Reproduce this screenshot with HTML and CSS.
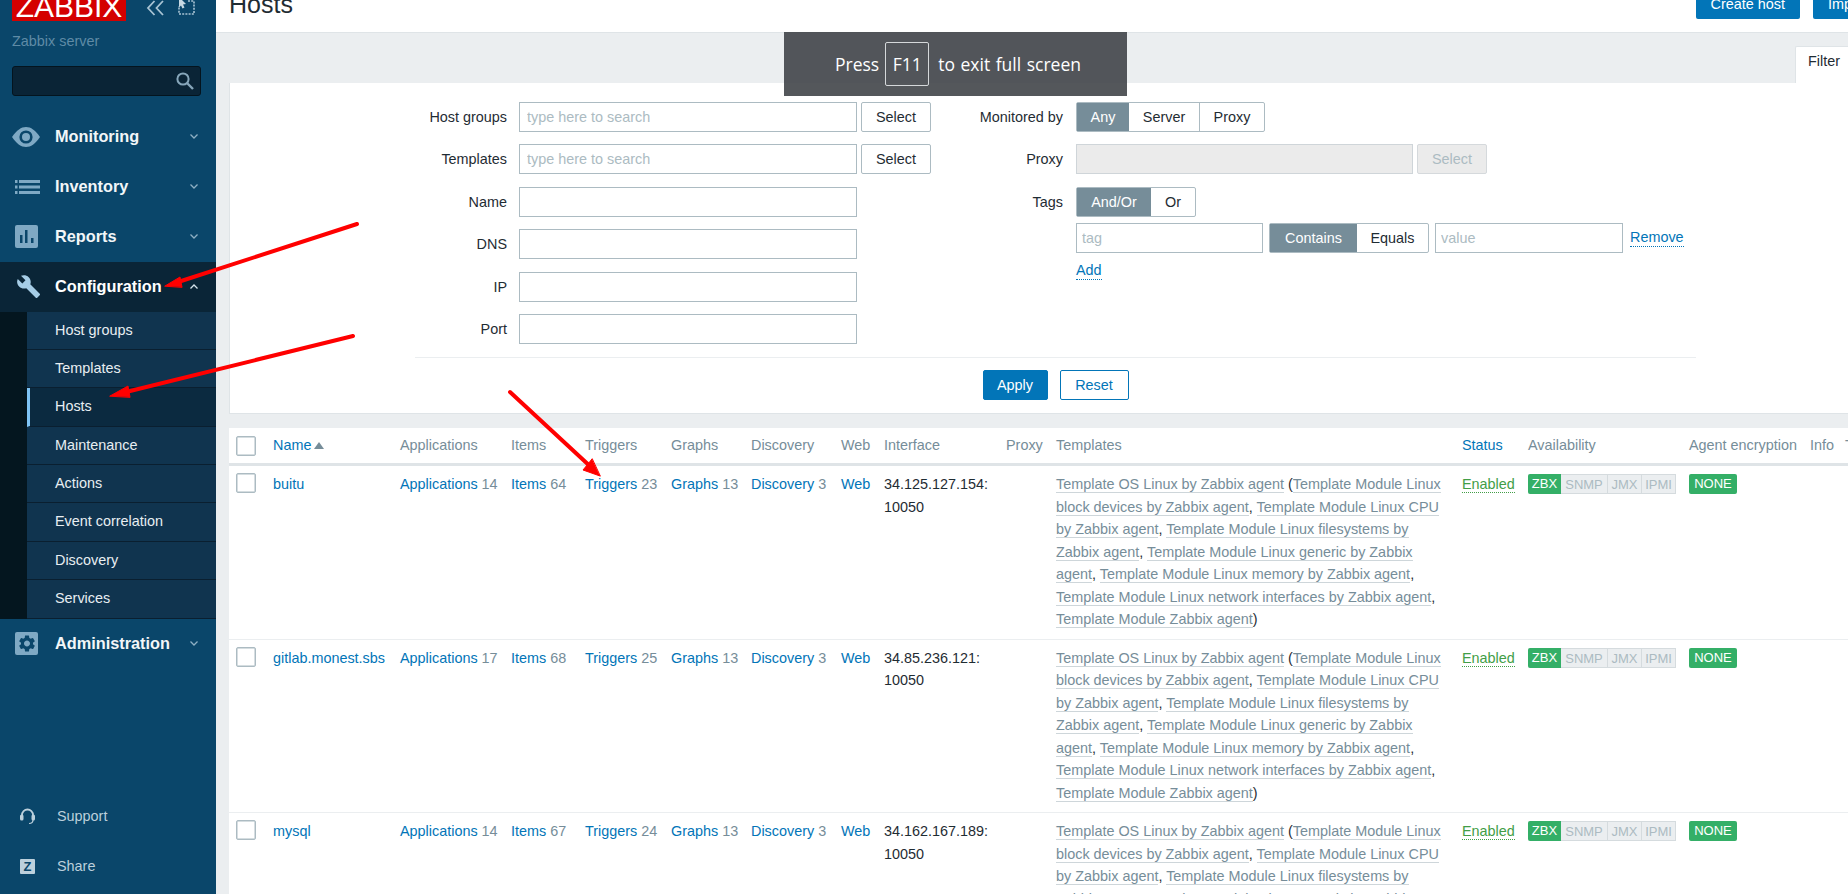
FILE: index.html
```html
<!doctype html>
<html>
<head>
<meta charset="utf-8">
<title>Configuration of hosts</title>
<link rel="stylesheet" href="styles.css">
</head>
<body>
<aside class="side">
  <div class="brand">
    <div class="logo"><span>ZABBIX</span></div>
    <svg class="brand-ico" width="19" height="16" viewBox="0 0 19 16"><path d="M8.500 1L2 8l6.500 7M17 1l-6.500 7 6.500 7" fill="none" stroke="#a9c4d4" stroke-width="1.800"/></svg>
    <svg class="brand-ico" width="17" height="15" viewBox="0 0 17 15"><path d="M10 1h6v13H1V6" fill="none" stroke="#a9c4d4" stroke-width="1.600" stroke-dasharray="2 1.200"/><path d="M1-3l7 7-3 .5 1.500 3-2 1-1.500-3-2 2z" fill="#c6d8e3"/></svg>
  </div>
  <div class="server">Zabbix server</div>
  <div class="search">
    <svg width="20" height="20" viewBox="0 0 20 20"><circle cx="8" cy="8" r="5.600" fill="none" stroke="#86a6ba" stroke-width="2"/><path d="M12 12l6 6" stroke="#86a6ba" stroke-width="2.400"/></svg>
  </div>
  <nav class="menu">
    <a class="top">
      <svg class="ico" width="28" height="20" viewBox="0 0 28 20"><path d="M0 10C5 3 9 0 14 0s9 3 14 10c-5 7-9 10-14 10S5 17 0 10z" fill="#7fa9c4"/><circle cx="14" cy="10" r="6.600" fill="#0a466a"/><circle cx="14" cy="10" r="4" fill="#7fa9c4"/></svg>
      <span class="label">Monitoring</span><svg class="chev" width="8" height="5" viewBox="0 0 8 5"><path d="M.5.5L4 4 7.500.5" fill="none" stroke="#8fb0c4" stroke-width="1.300"/></svg>
    </a>
    <a class="top">
      <svg class="ico" width="28" height="14" viewBox="0 0 28 14"><path d="M3 1.500h2.500M7 1.500h22M3 7h2.500M7 7h22M3 12.500h2.500M7 12.500h22" stroke="#7fa9c4" stroke-width="3"/></svg>
      <span class="label">Inventory</span><svg class="chev" width="8" height="5" viewBox="0 0 8 5"><path d="M.5.5L4 4 7.500.5" fill="none" stroke="#8fb0c4" stroke-width="1.300"/></svg>
    </a>
    <a class="top">
      <svg class="ico" width="28" height="23" viewBox="0 0 28 23"><rect x="3" width="23" height="23" rx="2" fill="#7fa9c4"/><path d="M8 10h2.500v8H8zM13 5h2.500v13H13zM19 13h2.500v5H19z" fill="#0a466a"/></svg>
      <span class="label">Reports</span><svg class="chev" width="8" height="5" viewBox="0 0 8 5"><path d="M.5.5L4 4 7.500.5" fill="none" stroke="#8fb0c4" stroke-width="1.300"/></svg>
    </a>
    <a class="top open">
      <svg class="ico" width="28" height="25" viewBox="-2.500 0 24 24"><path d="M22.700 19l-9.100-9.100c.9-2.300.4-5-1.500-6.900-2-2-5-2.400-7.400-1.300L9 6 6 9 1.600 4.700C.4 7.100.9 10.100 2.900 12.100c1.900 1.900 4.600 2.400 6.900 1.500l9.100 9.100c.4.400 1 .4 1.400 0l2.300-2.300c.5-.4.5-1.100.1-1.400z" fill="#a6cde6"/></svg>
      <span class="label">Configuration</span><svg class="chev" width="8" height="5" viewBox="0 0 8 5"><path d="M.5 4.500L4 1l3.500 3.500" fill="none" stroke="#d5e3ec" stroke-width="1.300"/></svg>
    </a>
    <div class="sub">
      <a>Host groups</a>
      <a>Templates</a>
      <a class="on">Hosts</a>
      <a>Maintenance</a>
      <a>Actions</a>
      <a>Event correlation</a>
      <a>Discovery</a>
      <a>Services</a>
    </div>
    <a class="top">
      <svg class="ico" width="28" height="23" viewBox="0 0 28 23"><rect x="3" width="23" height="23" rx="2" fill="#7fa9c4"/><svg x="5" y="1.500" width="20" height="20" viewBox="0 0 24 24"><path fill="#0a466a" fill-rule="evenodd" d="M19.140 12.940c.04-.3.06-.61.06-.94 0-.32-.02-.64-.07-.94l2.030-1.580a.49.49 0 0 0 .12-.61l-1.920-3.320a.488.488 0 0 0-.59-.22l-2.390.96c-.5-.38-1.030-.7-1.620-.94l-.36-2.540a.484.484 0 0 0-.48-.41h-3.840c-.24 0-.43.17-.47.41l-.36 2.540c-.59.24-1.130.57-1.620.94l-2.390-.96c-.22-.08-.47 0-.59.22L2.740 8.870c-.12.21-.08.47.12.61l2.030 1.580c-.05.3-.09.63-.09.94s.02.64.07.94l-2.030 1.580a.49.49 0 0 0-.12.61l1.920 3.320c.12.22.37.29.59.22l2.390-.96c.5.38 1.030.7 1.620.94l.36 2.540c.05.24.24.41.48.41h3.840c.24 0 .44-.17.47-.41l.36-2.540c.59-.24 1.130-.56 1.620-.94l2.390.96c.22.08.47 0 .59-.22l1.920-3.320c.12-.22.07-.47-.12-.61l-2.010-1.580zM12 15.600c-1.980 0-3.600-1.620-3.600-3.600s1.620-3.600 3.600-3.600 3.600 1.620 3.600 3.600-1.620 3.600-3.600 3.600z"/></svg></svg>
      <span class="label">Administration</span><svg class="chev" width="8" height="5" viewBox="0 0 8 5"><path d="M.5.5L4 4 7.500.5" fill="none" stroke="#8fb0c4" stroke-width="1.300"/></svg>
    </a>
  </nav>
  <div class="foot">
    <a>
      <span class="foot-ico"><svg width="15" height="17" viewBox="0 0 15 17"><path d="M2 9V7a5.500 5.500 0 0 1 11 0v2" fill="none" stroke="#bcd0dc" stroke-width="1.800"/><rect y="6.500" width="3.500" height="6" rx="1.500" fill="#bcd0dc"/><rect x="11.500" y="6.500" width="3.500" height="6" rx="1.500" fill="#bcd0dc"/><path d="M13 12c0 2.500-1.500 3.500-4 3.500" fill="none" stroke="#bcd0dc" stroke-width="1.200"/></svg></span>
      Support
    </a>
    <a>
      <span class="foot-ico"><span class="z">Z</span></span>
      Share
    </a>
  </div>
</aside>

<main class="main">
  <header class="head">
    <h1>Hosts</h1>
    <div class="head-btns">
      <a class="btn">Create host</a>
      <a class="btn">Import</a>
    </div>
  </header>

  <div class="tabs"><span class="tab">Filter</span></div>

  <section class="filter">
    <div class="filter-cols">
      <div class="col-left">
        <div class="row"><label>Host groups</label><input class="txt" placeholder="type here to search"><button class="sel">Select</button></div>
        <div class="row"><label>Templates</label><input class="txt" placeholder="type here to search"><button class="sel">Select</button></div>
        <div class="row"><label>Name</label><input class="txt"></div>
        <div class="row"><label>DNS</label><input class="txt"></div>
        <div class="row"><label>IP</label><input class="txt"></div>
        <div class="row"><label>Port</label><input class="txt"></div>
      </div>
      <div class="col-right">
        <div class="row"><label>Monitored by</label>
          <div class="seg"><span class="on any">Any</span><span class="srv">Server</span><span class="prx">Proxy</span></div>
        </div>
        <div class="row"><label>Proxy</label><input class="txt proxy" disabled><button class="sel off" disabled>Select</button></div>
        <div class="row tight"><label>Tags</label>
          <div class="seg"><span class="on andor">And/Or</span><span class="or">Or</span></div>
        </div>
        <div class="tag-row">
          <input class="txt tag" placeholder="tag">
          <div class="seg"><span class="on contains">Contains</span><span class="equals">Equals</span></div>
          <input class="txt tag" placeholder="value">
          <a class="dot">Remove</a>
        </div>
        <div class="add-row"><a class="dot">Add</a></div>
      </div>
    </div>
    <div class="filter-foot">
      <button class="apply">Apply</button>
      <button class="reset">Reset</button>
    </div>
  </section>

  <table class="hosts">
    <colgroup>
      <col class="c-check"><col class="c-name"><col class="c-apps"><col class="c-items"><col class="c-trig"><col class="c-graph"><col class="c-disc"><col class="c-web"><col class="c-if"><col class="c-proxy"><col class="c-tpl"><col class="c-status"><col class="c-avail"><col class="c-enc"><col class="c-info"><col class="c-tags">
    </colgroup>
    <thead>
      <tr>
        <th><span class="check"></span></th>
        <th><a>Name</a><i class="sort"></i></th>
        <th>Applications</th>
        <th>Items</th>
        <th>Triggers</th>
        <th>Graphs</th>
        <th>Discovery</th>
        <th>Web</th>
        <th>Interface</th>
        <th>Proxy</th>
        <th>Templates</th>
        <th><a>Status</a></th>
        <th>Availability</th>
        <th>Agent encryption</th>
        <th>Info</th>
        <th>Tags</th>
      </tr>
    </thead>
    <tbody>
      <tr>
        <td><span class="check"></span></td>
        <td><a>buitu</a></td>
        <td><a>Applications</a> <em>14</em></td>
        <td><a>Items</a> <em>64</em></td>
        <td><a>Triggers</a> <em>23</em></td>
        <td><a>Graphs</a> <em>13</em></td>
        <td><a>Discovery</a> <em>3</em></td>
        <td><a>Web</a></td>
        <td>34.125.127.154:<br>10050</td>
        <td></td>
        <td><a class="tpl">Template OS Linux by Zabbix agent</a> (<a class="tpl">Template Module Linux block devices by Zabbix agent</a>, <a class="tpl">Template Module Linux CPU by Zabbix agent</a>, <a class="tpl">Template Module Linux filesystems by Zabbix agent</a>, <a class="tpl">Template Module Linux generic by Zabbix agent</a>, <a class="tpl">Template Module Linux memory by Zabbix agent</a>, <a class="tpl">Template Module Linux network interfaces by Zabbix agent</a>, <a class="tpl">Template Module Zabbix agent</a>)</td>
        <td><a class="enabled">Enabled</a></td>
        <td><div class="avail"><b>ZBX</b><span>SNMP</span><span>JMX</span><span>IPMI</span></div></td>
        <td><b class="none">NONE</b></td>
        <td></td>
        <td></td>
      </tr>
      <tr>
        <td><span class="check"></span></td>
        <td><a>gitlab.monest.sbs</a></td>
        <td><a>Applications</a> <em>17</em></td>
        <td><a>Items</a> <em>68</em></td>
        <td><a>Triggers</a> <em>25</em></td>
        <td><a>Graphs</a> <em>13</em></td>
        <td><a>Discovery</a> <em>3</em></td>
        <td><a>Web</a></td>
        <td>34.85.236.121:<br>10050</td>
        <td></td>
        <td><a class="tpl">Template OS Linux by Zabbix agent</a> (<a class="tpl">Template Module Linux block devices by Zabbix agent</a>, <a class="tpl">Template Module Linux CPU by Zabbix agent</a>, <a class="tpl">Template Module Linux filesystems by Zabbix agent</a>, <a class="tpl">Template Module Linux generic by Zabbix agent</a>, <a class="tpl">Template Module Linux memory by Zabbix agent</a>, <a class="tpl">Template Module Linux network interfaces by Zabbix agent</a>, <a class="tpl">Template Module Zabbix agent</a>)</td>
        <td><a class="enabled">Enabled</a></td>
        <td><div class="avail"><b>ZBX</b><span>SNMP</span><span>JMX</span><span>IPMI</span></div></td>
        <td><b class="none">NONE</b></td>
        <td></td>
        <td></td>
      </tr>
      <tr>
        <td><span class="check"></span></td>
        <td><a>mysql</a></td>
        <td><a>Applications</a> <em>14</em></td>
        <td><a>Items</a> <em>67</em></td>
        <td><a>Triggers</a> <em>24</em></td>
        <td><a>Graphs</a> <em>13</em></td>
        <td><a>Discovery</a> <em>3</em></td>
        <td><a>Web</a></td>
        <td>34.162.167.189:<br>10050</td>
        <td></td>
        <td><a class="tpl">Template OS Linux by Zabbix agent</a> (<a class="tpl">Template Module Linux block devices by Zabbix agent</a>, <a class="tpl">Template Module Linux CPU by Zabbix agent</a>, <a class="tpl">Template Module Linux filesystems by Zabbix agent</a>, <a class="tpl">Template Module Linux generic by Zabbix agent</a>, <a class="tpl">Template Module Linux memory by Zabbix agent</a>, <a class="tpl">Template Module Linux network interfaces by Zabbix agent</a>, <a class="tpl">Template Module Zabbix agent</a>)</td>
        <td><a class="enabled">Enabled</a></td>
        <td><div class="avail"><b>ZBX</b><span>SNMP</span><span>JMX</span><span>IPMI</span></div></td>
        <td><b class="none">NONE</b></td>
        <td></td>
        <td></td>
      </tr>
    </tbody>
  </table>
</main>

<div class="fs-note">Press <kbd>F11</kbd> to exit full screen</div>

<svg class="marks" width="1848" height="894" viewBox="0 0 1848 894">
  <g fill="#f00" stroke="#f00" stroke-linecap="round">
    <path d="M357 224L175 283" stroke-width="4" fill="none"/>
    <path d="M165 286L180 277 182 287z" stroke-width="1"/>
    <path d="M353 336L122 393" stroke-width="4" fill="none"/>
    <path d="M110 396L128 386 130 397z" stroke-width="1"/>
    <path d="M510 392L592 468" stroke-width="4" fill="none"/>
    <path d="M600 476L583 470 592 459z" stroke-width="1"/>
  </g>
</svg>
</body>
</html>
```

FILE: styles.css
```css
html,body{margin:0; height:894px; overflow:hidden}
body{display:flex; background:#ebeef0; color:#1f2c33; font:14.4px/22.5px "Liberation Sans",Arial,sans-serif}
a{color:#0275b8; text-decoration:none}
em{font-style:normal; color:#768d99}
button,input{font:14.4px "Liberation Sans",Arial,sans-serif; box-sizing:border-box; margin:0}

/* sidebar */
.side{width:216px; flex:none; height:894px; background:#0a466a; display:flex; flex-direction:column}
.brand{height:21px; padding-left:12px; display:flex}
.logo{width:114px; height:21px; overflow:hidden; background:#d40000; color:#fff; font-size:30px; line-height:13px; text-align:center}
.brand-ico{margin:0 0 0 20px; flex:none}
.brand-ico + .brand-ico{margin-left:13px}
.server{margin:9px 0 0 12px; color:#5f8ba6}
.search{margin:13px 15px 0 12px; height:30px; box-sizing:border-box; background:#0a2436; border:1px solid #04141e; border-radius:3px; display:flex; justify-content:flex-end; align-items:center; padding-right:5px}
.menu{margin-top:16px}
.top{height:50px; display:flex; align-items:center; padding-left:12px; color:#f2f6f8; font-weight:bold; font-size:16.3px}
.top .ico{flex:none; width:28px}
.top .label{margin-left:15px; flex:1}
.top .chev{margin-right:18px; flex:none}
.top.open{background:#0a2537; color:#fff}
.sub{padding-left:27px; background:#04161f}
.sub a{display:block; height:38.4px; box-sizing:border-box; line-height:37px; padding-left:28px; background:#10344f; border-bottom:1px solid #0a1f30; color:#e8eef2}
.sub a.on{background:#0b2a40; border-left:3px solid #7fc4f5; padding-left:25px}
.foot{margin-top:auto; padding-bottom:3px}
.foot a{height:50px; display:flex; align-items:center; color:#bcd0dc}
.foot-ico{width:57px; display:flex; justify-content:center}
.foot-ico svg,.z{margin-right:2px}
.z{width:15px; height:15px; background:#bcd0dc; color:#0a466a; font-weight:bold; font-size:13px; line-height:15px; text-align:center; border-radius:1px}

/* page head */
.main{flex:1; min-width:0; overflow:hidden; height:894px}
.head{height:32px; background:#fff; border-bottom:1px solid #dfe4e7; display:flex; justify-content:space-between; padding-left:13px}
h1{margin:0; font-size:25px; font-weight:normal; line-height:9px}
.head-btns{display:flex; gap:13px; margin-right:-36px}
.btn{height:19px; box-sizing:border-box; padding:0 15px; background:#0275b8; color:#fff; line-height:8px; border-radius:0 0 2px 2px; overflow:hidden}
.btn:last-child{width:71px}
.tabs{height:50px; display:flex; justify-content:flex-end; align-items:flex-end}
.tab{width:53px; height:37px; box-sizing:border-box; background:#fff; border:1px solid #dfe4e7; border-bottom:0; border-right:0; border-radius:2px 0 0 0; padding-left:12px; line-height:29px}

/* filter */
.filter{margin-left:13px; height:331px; box-sizing:border-box; background:#fff; border:1px solid #dfe4e7; border-width:0 0 1px 1px; padding-top:19px}
.filter-cols{display:flex; height:255px}
.col-left{width:710px}
.row{display:flex; height:30px; margin-bottom:12.4px; align-items:stretch}
.row label{width:277px; margin-right:12px; text-align:right; line-height:30px; flex:none}
.col-right .row label{width:123px; margin-right:13px}
.txt{width:338px; height:30px; border:1px solid #acbbc2; background:#fff; padding:0 7px; color:#1f2c33; outline:0}
.txt::placeholder{color:#acbbc2}
.sel{width:70px; height:30px; margin-left:4px; background:#fff; border:1px solid #acbbc2; border-radius:2px; color:#1f2c33}
.proxy{width:337px; background:#ebebeb; border-color:#cfd5d9}
.sel.off{background:#ebebeb; border-color:#d5d9dc; color:#acbbc2}
.row.tight{margin-bottom:6px}
.seg{display:flex; height:30px; box-sizing:border-box; border:1px solid #acbbc2; border-radius:2px; background:#fff; line-height:28px; text-align:center}
.seg span{display:block; box-sizing:border-box}
.seg span + span{border-left:1px solid #acbbc2}
.seg .on{background:#768d99; color:#fff}
.seg .on + span{border-left:0}
.any{width:52px}
.srv{width:70px}
.prx{width:65px}
.andor{width:74px}
.or{width:44px}
.contains{width:87px}
.equals{width:71px}
.tag-row{display:flex; margin-left:136px; height:30px}
.tag{width:187px; padding:0 5px}
.tag-row .seg{margin:0 6px}
.tag-row .txt + .seg + .txt{width:188px}
.dot{border-bottom:1px dotted #0275b8; line-height:17px; align-self:center; margin-left:7px}
.add-row{margin:9px 0 0 136px; display:flex}
.add-row .dot{margin-left:0}
.filter-foot{width:1281px; margin-left:185px; box-sizing:border-box; border-top:1px solid #ebeef0; padding-top:12px; display:flex; justify-content:center; gap:12px}
.apply,.reset{height:30px; border-radius:2px; border:1px solid #0275b8}
.apply{width:65px; background:#0275b8; color:#fff}
.reset{width:69px; background:#fff; color:#0275b8}

/* hosts table */
.hosts{margin:14px 0 0 13px; width:1619px; table-layout:fixed; border-collapse:separate; border-spacing:0; background:#fff}
.c-check{width:37px}
.c-name{width:127px}
.c-apps{width:111px}
.c-items{width:74px}
.c-trig{width:86px}
.c-graph{width:80px}
.c-disc{width:90px}
.c-web{width:43px}
.c-if{width:122px}
.c-proxy{width:50px}
.c-tpl{width:406px}
.c-status{width:66px}
.c-avail{width:161px}
.c-enc{width:121px}
.c-info{width:35px}
.c-tags{width:10px}
th{height:38px; box-sizing:border-box; padding:0 0 0 7px; font-weight:normal; text-align:left; color:#768d99; border-bottom:3px solid #dfe4e7; white-space:nowrap; overflow:hidden}
td{padding:7px 7px 8px; vertical-align:top; border-bottom:1px solid #ebeef0; white-space:nowrap}
td:nth-child(9),td:nth-child(11){white-space:normal}
td:nth-child(9){padding-right:0}
.check{display:block; width:20px; height:20px; box-sizing:border-box; border:1px solid #acbbc2; border-radius:2px; background:#fff; box-shadow:inset 0 0 0 .5px #acbbc2}
.sort{display:inline-block; margin-left:3px; border:5px solid transparent; border-top:0; border-bottom:7px solid #768d99; vertical-align:1px}
.tpl{color:#768d99; border-bottom:1px solid #ced6da}
.enabled{color:#429e47; border-bottom:1px dotted #429e47}
.avail{display:flex; width:148px; height:20px; margin-top:1px; line-height:19px; font-size:13px; text-align:center; color:#acbbc2; background:#ebeef0; border-radius:2px; box-sizing:border-box}
.avail b{width:33px; font-weight:normal; background:#34af67; color:#fff; border-radius:2px 0 0 2px}
.avail span{border:1px solid #d5dbde; border-left:0; box-sizing:border-box}
.avail span:nth-child(2){width:47px}
.avail span:nth-child(3){width:34px}
.avail span:nth-child(4){width:34px}
.none{display:block; width:48px; height:20px; margin-top:1px; background:#34af67; color:#fff; font-weight:normal; font-size:13px; line-height:19px; text-align:center; border-radius:2px}

/* things lying over the page */
.fs-note{position:absolute; left:784px; top:32px; width:343px; height:64px; box-sizing:border-box; padding-left:51px; display:flex; align-items:center; background:rgba(60,64,68,.88); color:#fff; font:17.5px "Open Sans",sans-serif; word-spacing:1px; white-space:nowrap}
kbd{font:inherit; width:44px; height:44px; box-sizing:border-box; margin:0 9px 0 6px; border:1px solid #d5d8da; border-radius:2px; display:flex; align-items:center; justify-content:center}
.marks{position:absolute; left:0; top:0; pointer-events:none}
```
